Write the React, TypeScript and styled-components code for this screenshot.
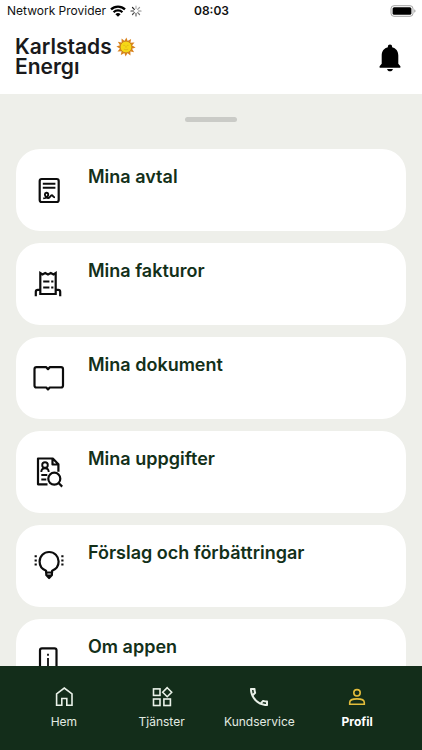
import React from "react";
import styled, { createGlobalStyle } from "styled-components";
import { MdOutlineCall } from "react-icons/md";

const GlobalStyle = createGlobalStyle`
  *, *::before, *::after { box-sizing: border-box; }
  body {
    margin: 0;
    background: #eeefea;
    font-family: Inter, "Liberation Sans", sans-serif;
  }
`;

const Screen = styled.div`
  display: flex;
  flex-direction: column;
  height: 100vh;
  background: #eeefea;
`;

const Header = styled.header`
  flex: none;
  background: #fff;
`;

const StatusBar = styled.div`
  display: grid;
  grid-template-columns: 1fr auto 1fr;
  align-items: center;
  height: 22px;
  padding: 0 6px 0 7px;
  font-size: 12px;
  line-height: 16px;
  color: #111;
`;

const Carrier = styled.div`
  display: flex;
  align-items: center;
  gap: 4px;
  white-space: nowrap;
`;

const Time = styled.time`
  font-size: 12px;
  font-weight: 600;
`;

const BatterySlot = styled.div`
  display: flex;
  justify-content: flex-end;
`;

const TitleBar = styled.div`
  display: flex;
  align-items: center;
  justify-content: space-between;
  height: 72px;
  padding: 0 18px 0 15px;
`;

const Brand = styled.a`
  display: flex;
  gap: 4px;
  margin-bottom: 2px;
  font-size: 21px;
  font-weight: 600;
  line-height: 20px;
  color: #1a1a1c;
  text-decoration: none;
`;

const IconButton = styled.button`
  display: flex;
  padding: 0;
  border: 0;
  background: none;
  color: #000;
  cursor: pointer;
`;

const Sheet = styled.main`
  flex: 1;
  min-height: 0;
  overflow-y: auto;
  scrollbar-width: none;
  padding: 23px 16px 12px;
`;

const Handle = styled.div`
  width: 52px;
  height: 5px;
  margin: 0 auto 27px;
  border-radius: 3px;
  background: #cacbc7;
`;

const CardList = styled.ul`
  display: flex;
  flex-direction: column;
  gap: 12px;
  margin: 0;
  padding: 0;
  list-style: none;
`;

const Card = styled.a`
  display: flex;
  align-items: center;
  gap: 22px;
  height: 82px;
  padding: 18px 14px;
  border-radius: 24px;
  background: #fff;
  color: #133019;
  text-decoration: none;
`;

const CardIcon = styled.svg`
  flex: none;
  width: 36px;
  height: 36px;
  fill: none;
  stroke: #0c0c0c;
  stroke-width: 2.2;
  stroke-linejoin: round;
`;

const CardTitle = styled.span`
  align-self: flex-start;
  font-size: 18px;
  font-weight: 600;
  line-height: 20px;
`;

const TabBar = styled.nav`
  flex: none;
  display: grid;
  grid-template-columns: repeat(4, 1fr);
  height: 84px;
  padding: 19px 16px 0 15px;
  background: #132d1a;
`;

const Tab = styled.a<{ $active?: boolean }>`
  display: flex;
  flex-direction: column;
  align-items: center;
  gap: 5px;
  font-size: 12px;
  font-weight: ${(p) => (p.$active ? 700 : 400)};
  line-height: 16px;
  color: ${(p) => (p.$active ? "#fff" : "#e3ebe2")};
  text-decoration: none;

  svg {
    color: ${(p) => (p.$active ? "#e3bd3b" : "#e9f1e8")};
  }
`;

const Wifi = () => (
  <svg width="16" height="12" viewBox="0 0 16 12" aria-hidden="true">
    <g fill="none" stroke="#000" strokeWidth="2.3">
      <path d="M1 4.4a10 10 0 0 1 14 0" />
      <path d="M3.6 7.3a6.2 6.2 0 0 1 8.8 0" />
    </g>
    <path d="M8 11.8 5.4 9.2a3.7 3.7 0 0 1 5.2 0z" />
  </svg>
);

const spokes = [0, 45, 90, 135, 180, 225, 270, 315];

const Spinner = () => (
  <svg width="12" height="12" viewBox="0 0 12 12" aria-hidden="true">
    {spokes.map((angle, i) => (
      <path
        key={angle}
        d="M6 1v2.6"
        stroke="#000"
        strokeWidth="1.2"
        strokeLinecap="round"
        opacity={0.3 + i * 0.08}
        transform={`rotate(${angle} 6 6)`}
      />
    ))}
  </svg>
);

const Battery = () => (
  <svg width="26" height="12" viewBox="0 0 26 12" aria-label="Batteri">
    <rect x="1" y="0.7" width="22" height="10.6" rx="3" fill="none" stroke="#a3a3a3" />
    <rect x="2.6" y="2.2" width="18.8" height="7.6" rx="1.6" />
    <path d="M24.4 4.2c1.4.6 1.4 3 0 3.6z" fill="#8c8c8c" />
  </svg>
);

const rays = Array.from({ length: 12 }, (_, i) => i * 30);

const Sun = () => (
  <svg width="20" height="20" viewBox="0 0 20 20" aria-hidden="true">
    {rays.map((angle) => (
      <path key={angle} d="M8.1 4.6 10.4.4l1.500 4.200z" fill="#d9821c" transform={`rotate(${angle} 10 10)`} />
    ))}
    <circle cx="10" cy="10" r="5.800" fill="#f6d816" stroke="#c98518" strokeWidth="0.9" />
    <path d="M7.400 8.400h1.300M11.200 8.400h1.300M10 8.800v1.900M7.800 12.100q2.200 1.600 4.400 0" fill="none" stroke="#d9a81a" strokeWidth="0.7" />
  </svg>
);

const Bell = () => (
  <svg width="28" height="30" viewBox="0 0 28 30" aria-hidden="true">
    <path d="M14 1.500c1.300 0 2.100.9 2.100 2.100v.7c3.900.9 6.200 4 6.200 8.200v8.200l1.900 2.200c.7.900.3 1.900-.8 1.900H4.600c-1.100 0-1.500-1-.8-1.900l1.900-2.200v-8.200c0-4.200 2.300-7.300 6.200-8.200v-.7c0-1.200.8-2.100 2.100-2.100z" />
    <path d="M11.100 25.900h5.800c-.3 1.500-1.400 2.300-2.900 2.300s-2.600-.8-2.900-2.300z" />
  </svg>
);

const TabIcon = styled.svg`
  width: 24px;
  height: 24px;
  fill: none;
  stroke: currentColor;
  stroke-width: 1.6;
`;

const HomeIcon = () => (
  <TabIcon viewBox="0 0 24 24" aria-hidden="true">
    <path d="M4.600 20.200V8.900L12.300 3.100 20 8.900v11.300h-5.200v-6.700h-5v6.700z" />
  </TabIcon>
);

const ServicesIcon = () => (
  <TabIcon viewBox="0 0 24 24" aria-hidden="true">
    <rect x="3.500" y="3.900" width="6.500" height="6.500" />
    <rect x="3.500" y="14" width="6.500" height="6.500" />
    <rect x="13.900" y="14" width="6.500" height="6.500" />
    <path d="m17.200 2.700 4.500 4.500-4.500 4.500-4.500-4.500z" />
  </TabIcon>
);

const ProfileIcon = () => (
  <TabIcon viewBox="0 0 24 24" aria-hidden="true">
    <circle cx="12" cy="7.800" r="3.200" />
    <path d="M4.700 19.200v-1.700c0-2.400 3.700-3.600 7.300-3.600s7.300 1.200 7.300 3.600v1.700z" />
  </TabIcon>
);

const cards = [
  {
    title: "Mina avtal",
    icon: (
      <>
        <rect x="9.700" y="7" width="19" height="23" rx="2" />
        <path d="M12.800 11.700h12.600M12.800 15.700h12.600" strokeWidth="1.900" />
        <path d="M13.200 26.400c3.500-.2 5.400-2.400 5-4.400-.4-1.900-3.200-1.700-3.300.3-.1 2 1.900 3.900 3.500 3.700 1.700-.2 2-2.800 3.400-2.800 1.300 0 .8 2.200 3.200 2.200" strokeWidth="1.900" />
      </>
    ),
  },
  {
    title: "Mina fakturor",
    icon: (
      <>
        <path d="M10.300 28V7l2.200 1.500L15.200 7 18 8.500 20.800 7l2.700 1.500L25.700 7v21z" strokeLinejoin="miter" />
        <path d="M13.200 15.500h6.200M21.200 15.500h2.200M13.200 21.500h6.200M21.200 21.500h2.200" />
        <path d="M5.800 30.300v-4.500q0-2 2-2h2.500M30.200 30.300v-4.500q0-2-2-2h-2.500" />
      </>
    ),
  },
  {
    title: "Mina dokument",
    icon: (
      <path d="M18 9.200 16.300 7.200H6.500q-2 0-2 2v16.300q0 2 2 2h9.800L18 29.400l1.700-1.900h11.300q2 0 2-2V9.200q0-2-2-2H19.700z" />
    ),
  },
  {
    title: "Mina uppgifter",
    icon: (
      <>
        <path d="M17.500 30.300H8V4.500h14.800l5.600 5.700v7.500M22.500 4.500v6h6" />
        <circle cx="15" cy="11" r="2.800" strokeWidth="1.900" />
        <path d="M11.300 18c0-5 7.400-5 7.400 0M11.300 21h6M11.300 25.500h5" strokeWidth="1.900" />
        <circle cx="24.300" cy="24.700" r="6" />
        <path d="m28.600 29 3.600 3.600" />
      </>
    ),
  },
  {
    title: "Förslag och förbättringar",
    icon: (
      <>
        <path d="M16.100 24.500v-1.800c-4-1.500-6.500-5-6.500-9.200a9.500 9.500 0 0 1 19 0c0 4.200-2.500 7.700-6.500 9.200v1.800z" />
        <path d="M16.300 24.500v2.500l2.800 3 2.800-3v-2.500M16.300 27.500h5.500" />
        <path d="M5.700 7.300v2M5.700 11.400v2M5.700 15.500v2M32.400 7.300v2M32.400 11.400v2M32.400 15.500v2" />
      </>
    ),
  },
  {
    title: "Om appen",
    icon: (
      <>
        <rect x="10" y="6.300" width="16.500" height="25" rx="2" />
        <path d="M18 11.800v2M18 16v8" strokeWidth="1.800" />
      </>
    ),
  },
];

const tabs = [
  { label: "Hem", icon: <HomeIcon /> },
  { label: "Tjänster", icon: <ServicesIcon /> },
  { label: "Kundservice", icon: <MdOutlineCall size={24} /> },
  { label: "Profil", icon: <ProfileIcon />, active: true },
];

export default function App() {
  return (
    <Screen>
      <GlobalStyle />
      <Header>
        <StatusBar>
          <Carrier>
            <span>Network Provider</span>
            <Wifi />
            <Spinner />
          </Carrier>
          <Time>08:03</Time>
          <BatterySlot>
            <Battery />
          </BatterySlot>
        </StatusBar>
        <TitleBar>
          <Brand href="#hem">
            <span>
              Karlstads
              <br />
              Energı
            </span>
            <Sun />
          </Brand>
          <IconButton type="button" aria-label="Aviseringar">
            <Bell />
          </IconButton>
        </TitleBar>
      </Header>
      <Sheet>
        <Handle />
        <CardList>
          {cards.map((card) => (
            <li key={card.title}>
              <Card href="#profil">
                <CardIcon viewBox="0 0 36 36" aria-hidden="true">
                  {card.icon}
                </CardIcon>
                <CardTitle>{card.title}</CardTitle>
              </Card>
            </li>
          ))}
        </CardList>
      </Sheet>
      <TabBar>
        {tabs.map((tab) => (
          <Tab
            key={tab.label}
            href={`#${tab.label.toLowerCase()}`}
            $active={tab.active}
            aria-current={tab.active ? "page" : undefined}
          >
            {tab.icon}
            <span>{tab.label}</span>
          </Tab>
        ))}
      </TabBar>
    </Screen>
  );
}
